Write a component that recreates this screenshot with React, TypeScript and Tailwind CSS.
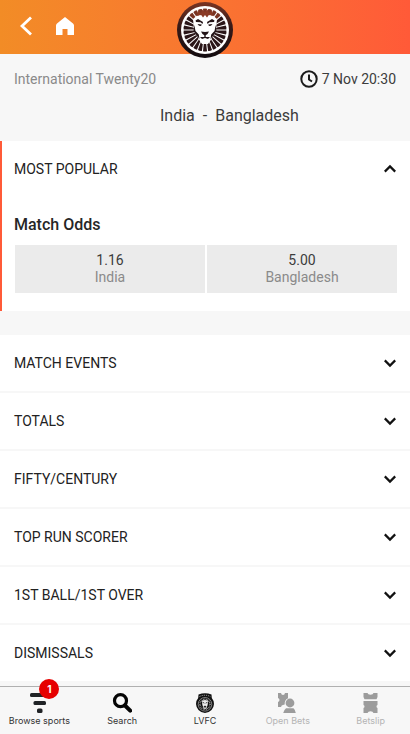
import { useState } from "react";

const markets = [
  "Match Events",
  "Totals",
  "Fifty/Century",
  "Top Run Scorer",
  "1st Ball/1st Over",
  "Dismissals",
];

const odds = [
  { team: "India", price: "1.16" },
  { team: "Bangladesh", price: "5.00" },
];

const rays = Array.from({ length: 26 }, (_, i) => (i * 360) / 26);

const Chevron = ({ open }: { open: boolean }) => (
  <svg className="h-3 w-3 shrink-0" viewBox="0 0 12 12" fill="none" stroke="#111" strokeWidth="2.2" aria-hidden="true">
    <path d={open ? "M0.8 8.6 6 3.4 11.2 8.6" : "M0.8 3.4 6 8.6 11.2 3.4"} />
  </svg>
);

const LionLogo = () => (
  <svg className="h-14 w-14" viewBox="0 0 56 56" role="img" aria-label="Lobby">
    <defs>
      <linearGradient id="mane" x1="0" y1="0" x2="0" y2="1">
        <stop offset="0" stopColor="#7a3422" />
        <stop offset="0.4" stopColor="#3a1b18" />
        <stop offset="1" stopColor="#120c10" />
      </linearGradient>
    </defs>
    <circle cx="28" cy="28" r="28" fill="url(#mane)" />
    <circle cx="28" cy="28" r="24" fill="#fff" />
    {rays.map((angle) => (
      <path
        key={angle}
        d="M27.2 18 26 6.8Q28 6 30 6.8L28.8 18z"
        fill={angle < 50 || angle > 310 ? "#7a3422" : "#2b1618"}
        transform={`rotate(${angle} 28 28)`}
      />
    ))}
    <path
      d="M28 12 31 13 36 13.5 40 17 39.5 22 39 28 35.5 32 34.5 37 31 42H25L21.5 37 20.5 32 17 28 16.5 22 16 17 20 13.5 25 13z"
      fill="#fff"
    />
    <path d="M20 14 21 8.5 24 11 25.5 7.5 28 10 30.5 7.5 32 11 35 8.5 36 14 32 12.8 30 15.5 28 13 26 15.5 24 12.8z" fill="#8a3a25" />
    <g fill="#241518">
      <path d="M18.5 18.5 21 17 26 20 25.5 22 23.5 20.3 19 20z" />
      <path d="M37.5 18.5 35 17 30 20 30.5 22 32.5 20.3 37 20z" />
      <path d="M20.5 22 24.8 22.6 24 24 22 23.8z" />
      <path d="M35.5 22 31.2 22.6 32 24 34 23.8z" />
      <path d="M24 29.5 28 30 32 29.5 30.5 32 28.7 33.3V35L33 35 31 37 28 36 25 37 23 35 27.3 35V33.3L25.5 32z" />
      <path d="M17.3 23 18.5 29 21.8 32.5 22.5 37 20 34 16.5 29z" />
      <path d="M38.7 23 37.5 29 34.2 32.5 33.5 37 36 34 39.5 29z" />
    </g>
  </svg>
);

const BrowseIcon = () => (
  <svg className="h-5 w-5" viewBox="0 0 20 20" fill="#202326" aria-hidden="true">
    <rect x="1" y="0" width="18" height="4" rx="1.5" />
    <rect x="4.5" y="8" width="12.5" height="4" rx="1.5" />
    <rect x="8" y="15.5" width="5.5" height="4.5" rx="1.5" />
  </svg>
);

const SearchIcon = () => (
  <svg className="h-5 w-5" viewBox="0 0 20 20" fill="none" stroke="#050505" aria-hidden="true">
    <circle cx="8.5" cy="7.7" r="6" strokeWidth="3.2" />
    <path d="M13 12.5 18.2 17.7" strokeWidth="4" strokeLinecap="round" />
  </svg>
);

const ClubIcon = () => (
  <svg className="h-5 w-5" viewBox="0 0 20 20" aria-hidden="true">
    <path d="M3.5 1.5Q10-1 16.5 1.5L16.8 5Q19 7.5 19 11 18.5 18.5 10 20 1.5 18.5 1 11 1 7.5 3.2 5z" fill="#111" />
    <path d="M4.5 3.5Q10 1 15.5 3.5" fill="none" stroke="#aaa" strokeDasharray="1.2 1" />
    <circle cx="10" cy="11.3" r="6.8" fill="none" stroke="#999" strokeWidth="0.8" />
    <circle cx="10" cy="11.3" r="5" fill="none" stroke="#bbb" strokeWidth="1.4" strokeDasharray="0.7 0.8" />
    <path d="M6.8 7.8 10 7 13.2 7.8 12.6 12 11.2 15.8H8.8L7.4 12z" fill="#eee" />
    <path d="M7.5 9.2 9.4 10.2M12.5 9.2 10.6 10.2M9 13.3H11L10 14.6z" stroke="#111" strokeWidth="0.8" fill="#111" />
  </svg>
);

const OpenBetsIcon = () => (
  <svg className="h-5 w-5" viewBox="0 0 20 20" fill="#9c9c9c" aria-hidden="true">
    <path d="M0 0H3Q3.3 2 5 2T7 0H10V5.2Q6.3 7 6.7 11.5L5 12Q3.5 12.2 3 14H0V9Q1.5 8.5 1.5 7T0 5z" />
    <circle cx="12" cy="10" r="4.4" />
    <path d="M8 15.2H15.5Q17.5 17 17.8 20H5.2Q5.8 17 8 15.2z" />
  </svg>
);

const BetslipIcon = () => (
  <svg className="h-5 w-5" viewBox="0 0 20 20" fill="#9c9c9c" aria-hidden="true">
    <path d="M2.5 0H6.5Q6.8 1.7 9.5 1.7T12.5 0H16.5V4L15.5 6.3H3.5L2.5 4z" />
    <path d="M2.5 8H16.5V12Q15.5 12.3 15.5 13.5T16.5 15V20H12.5Q12 18.3 9.5 18.3T6.5 20H2.5V15Q3.5 14.7 3.5 13.5T2.5 12z" />
  </svg>
);

const navItems = [
  { label: "Browse sports", Icon: BrowseIcon, badge: 1 },
  { label: "Search", Icon: SearchIcon },
  { label: "LVFC", Icon: ClubIcon },
  { label: "Open Bets", Icon: OpenBetsIcon, disabled: true },
  { label: "Betslip", Icon: BetslipIcon, disabled: true },
];

const Header = () => (
  <header className="relative flex h-[54px] items-center bg-linear-to-r from-[#f28c26] to-[#ff5a38] pl-5">
    <button type="button" aria-label="Back" className="mr-5">
      <svg className="h-6 w-3" viewBox="0 0 12 24" fill="none" stroke="#fff" strokeWidth="2.8">
        <path d="M11 2.5 2 11 11 19.5" />
      </svg>
    </button>
    <a href="#home" aria-label="Home page" className="ml-1">
      <svg className="h-5 w-[18px]" viewBox="0 0 18 20" fill="#fff">
        <path d="M9 0 17 6.5Q18 7.4 18 8.5V18H11.5V12H6.5V18H0V8.5Q0 7.4 1 6.5z" />
      </svg>
    </a>
    <a href="#lobby" className="absolute top-0.5 left-1/2 z-10 -translate-x-1/2">
      <LionLogo />
    </a>
  </header>
);

const EventInfo = () => (
  <section className="h-[87px] px-3.5 pt-[15px] text-[#3c3c3c]">
    <div className="flex h-5 items-center justify-between text-sm">
      <span className="text-[#8a8a8a]">International Twenty20</span>
      <span className="flex items-center gap-1">
        <svg className="h-[18px] w-[18px]" viewBox="0 0 18 18" fill="none" stroke="#1c1c1c" strokeWidth="2" aria-hidden="true">
          <circle cx="9" cy="9" r="7.7" />
          <path d="M9 4.5V9.5L12 11.5" />
        </svg>
        <time>7 Nov 20:30</time>
      </span>
    </div>
    <h1 className="mt-[15px] grid grid-cols-[1fr_auto_1fr] gap-2 text-base leading-6">
      <span className="text-right">India</span>
      <span>-</span>
      <span>Bangladesh</span>
    </h1>
  </section>
);

const BottomNav = () => (
  <nav className="sticky bottom-0 -mx-0.5 mt-auto grid h-12 shrink-0 grid-cols-5 border-t border-[#b0b0b0] bg-[#f7f7f7] font-[Inter,sans-serif]">
    {navItems.map(({ label, Icon, badge, disabled }) => (
      <button key={label} type="button" disabled={disabled} className="flex flex-col items-center pt-1.5">
        <span className="relative">
          <Icon />
          {badge && (
            <span className="absolute -top-3.5 left-2.5 flex h-5 w-5 items-center justify-center rounded-full bg-[#e60000] text-[10px] font-bold text-white">
              {badge}
            </span>
          )}
        </span>
        <span className={disabled ? "text-[9px] leading-4 text-[#b4b4b4]" : "text-[9px] leading-4 text-[#333]"}>
          {label}
        </span>
      </button>
    ))}
  </nav>
);

const App = () => {
  const [popularOpen, setPopularOpen] = useState(true);
  const [openMarket, setOpenMarket] = useState<string | null>(null);

  return (
    <div className="flex min-h-screen flex-col overflow-x-clip bg-[#f7f7f7] font-[Roboto,sans-serif]">
      <Header />
      <main>
        <EventInfo />

        <section className="border-l-2 border-[#ff5a38] bg-white">
          <h2>
            <button
              type="button"
              aria-expanded={popularOpen}
              onClick={() => setPopularOpen(!popularOpen)}
              className="flex h-14 w-full items-center justify-between pr-3.5 pl-3 text-sm text-[#222] uppercase"
            >
              Most Popular
              <Chevron open={popularOpen} />
            </button>
          </h2>
          {popularOpen && (
            <div className="pt-4 pr-[13px] pb-[18px] pl-3">
              <h3 className="mb-2 text-base leading-6 font-medium text-[#262626]">Match Odds</h3>
              <div className="grid grid-cols-2 gap-0.5 pl-px">
                {odds.map(({ team, price }) => (
                  <button key={team} type="button" className="h-12 bg-[#ebebeb] text-sm leading-[17px]">
                    <span className="block text-[#3c3c3c]">{price}</span>
                    <span className="block text-[#8a8a8a]">{team}</span>
                  </button>
                ))}
              </div>
            </div>
          )}
        </section>

        <div className="mt-6 mb-[5px] flex flex-col gap-0.5">
          {markets.map((market) => (
            <section key={market} className="bg-white">
              <button
                type="button"
                aria-expanded={openMarket === market}
                onClick={() => setOpenMarket(openMarket === market ? null : market)}
                className="flex h-14 w-full items-center justify-between px-3.5 text-sm text-[#222] uppercase"
              >
                {market}
                <Chevron open={openMarket === market} />
              </button>
            </section>
          ))}
        </div>
      </main>
      <BottomNav />
    </div>
  );
};

export default App;
